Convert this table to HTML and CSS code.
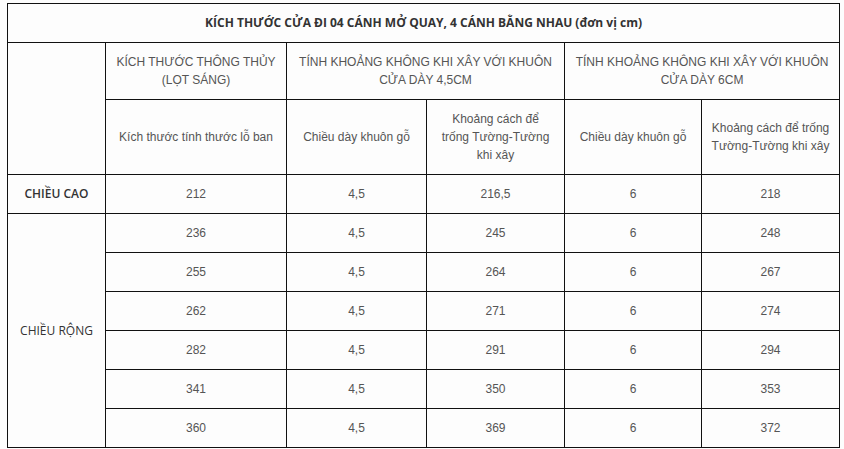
FILE: index.html
```html
<!DOCTYPE html>
<html lang="vi">
<head>
<meta charset="utf-8">
<title>Kích thước cửa đi 04 cánh</title>
<link rel="stylesheet" href="styles.css">
</head>
<body>
<table class="size-table">
  <colgroup>
    <col class="c1"><col class="c2"><col class="c3"><col class="c4"><col class="c5"><col class="c6">
  </colgroup>
  <tr class="r-title">
    <td colspan="6" class="title">KÍCH THƯỚC CỬA ĐI 04 CÁNH MỞ QUAY, 4 CÁNH BẰNG NHAU (đơn vị cm)</td>
  </tr>
  <tr class="r-head1">
    <td rowspan="2"></td>
    <td>KÍCH THƯỚC THÔNG THỦY<br>(LỌT SÁNG)</td>
    <td colspan="2">TÍNH KHOẢNG KHÔNG KHI XÂY VỚI KHUÔN<br>CỬA DÀY 4,5CM</td>
    <td colspan="2">TÍNH KHOẢNG KHÔNG KHI XÂY VỚI KHUÔN<br>CỬA DÀY 6CM</td>
  </tr>
  <tr class="r-head2">
    <td>Kích thước tính thước lỗ ban</td>
    <td>Chiều dày khuôn gỗ</td>
    <td>Khoảng cách để<br>trống Tường-Tường<br>khi xây</td>
    <td>Chiều dày khuôn gỗ</td>
    <td>Khoảng cách để trống<br>Tường-Tường khi xây</td>
  </tr>
  <tr class="r-data">
    <td class="label bold">CHIỀU CAO</td>
    <td>212</td><td>4,5</td><td>216,5</td><td>6</td><td>218</td>
  </tr>
  <tr class="r-data">
    <td rowspan="6" class="label">CHIỀU RỘNG</td>
    <td>236</td><td>4,5</td><td>245</td><td>6</td><td>248</td>
  </tr>
  <tr class="r-data"><td>255</td><td>4,5</td><td>264</td><td>6</td><td>267</td></tr>
  <tr class="r-data"><td>262</td><td>4,5</td><td>271</td><td>6</td><td>274</td></tr>
  <tr class="r-data"><td>282</td><td>4,5</td><td>291</td><td>6</td><td>294</td></tr>
  <tr class="r-data"><td>341</td><td>4,5</td><td>350</td><td>6</td><td>353</td></tr>
  <tr class="r-data"><td>360</td><td>4,5</td><td>369</td><td>6</td><td>372</td></tr>
</table>
</body>
</html>
```

FILE: styles.css
```css
html, body {
  margin: 0;
  padding: 0;
  background: #fdfdfd;
}

body {
  padding: 3px 0 0 7px;
}

.size-table {
  border-collapse: collapse;
  table-layout: fixed;
  width: 833px;
  font-family: "Liberation Sans", Arial, sans-serif;
  font-size: 12px;
  line-height: 18px;
  color: #555;
  background: #fdfdfd;
}

.size-table td {
  border: 1px solid #111;
  padding: 0 4px;
  text-align: center;
  vertical-align: middle;
}

.c1 { width: 98px; }
.c2 { width: 181px; }
.c3 { width: 140px; }
.c4 { width: 138px; }
.c5 { width: 137px; }
.c6 { width: 138px; }

.r-title td { height: 38px; }
.r-head1 td { height: 56px; }
.r-head2 td { height: 74px; }
.r-data td { height: 38px; }

.title {
  font-family: "Open Sans", "Liberation Sans", sans-serif;
  font-weight: 700;
  color: #333;
}

.label {
  font-family: "Open Sans", "Liberation Sans", sans-serif;
  color: #333;
}

.label.bold {
  font-weight: 600;
}
```
